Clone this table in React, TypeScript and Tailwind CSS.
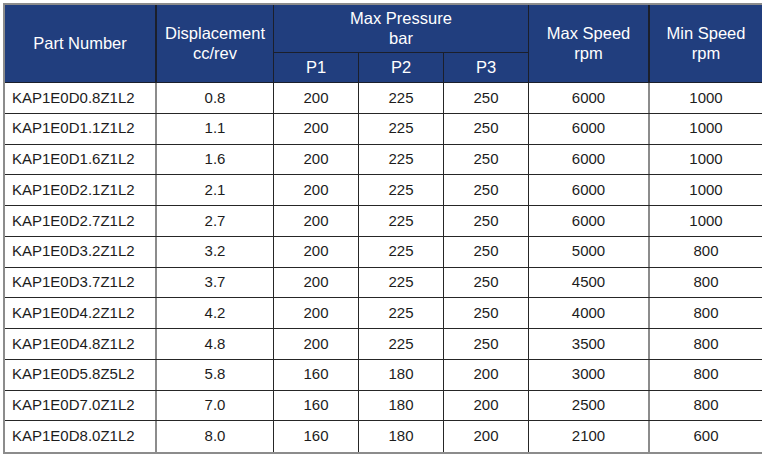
import React from "react";

type Row = [string, string, number, number, number, number, number];

const rows: Row[] = [
  ["KAP1E0D0.8Z1L2", "0.8", 200, 225, 250, 6000, 1000],
  ["KAP1E0D1.1Z1L2", "1.1", 200, 225, 250, 6000, 1000],
  ["KAP1E0D1.6Z1L2", "1.6", 200, 225, 250, 6000, 1000],
  ["KAP1E0D2.1Z1L2", "2.1", 200, 225, 250, 6000, 1000],
  ["KAP1E0D2.7Z1L2", "2.7", 200, 225, 250, 6000, 1000],
  ["KAP1E0D3.2Z1L2", "3.2", 200, 225, 250, 5000, 800],
  ["KAP1E0D3.7Z1L2", "3.7", 200, 225, 250, 4500, 800],
  ["KAP1E0D4.2Z1L2", "4.2", 200, 225, 250, 4000, 800],
  ["KAP1E0D4.8Z1L2", "4.8", 200, 225, 250, 3500, 800],
  ["KAP1E0D5.8Z5L2", "5.8", 160, 180, 200, 3000, 800],
  ["KAP1E0D7.0Z1L2", "7.0", 160, 180, 200, 2500, 800],
  ["KAP1E0D8.0Z1L2", "8.0", 160, 180, 200, 2100, 600],
];

const cols = "grid grid-cols-[152px_117px_85px_85px_85px_121px_1fr]";

const HeadCell = ({ className = "", children }: { className?: string; children: React.ReactNode }) => (
  <div
    className={
      "flex flex-col items-center justify-center text-center border-[#1b1f2b] leading-[19.5px] " +
      className
    }
  >
    {children}
  </div>
);

export default function App() {
  return (
    <div
      className="w-[762px] h-[457px] overflow-hidden bg-white pt-[3px] pl-[3px]"
      style={{ fontFamily: '"Liberation Sans", Arial, sans-serif' }}
    >
      <div className="w-[759px] border-l-2 border-t-2 border-b-2 border-[#8c8c8c]">
        {/* header */}
        <div className={cols + " grid-rows-[48px_30px] bg-[#213e7e] text-white text-[16.5px]"}>
          <HeadCell className="row-span-2 border-r-2 border-b">Part Number</HeadCell>
          <HeadCell className="row-span-2 border-r border-b">
            <span>Displacement</span>
            <span>cc/rev</span>
          </HeadCell>
          <HeadCell className="col-span-3 border-r border-b">
            <span>Max Pressure</span>
            <span>bar</span>
          </HeadCell>
          <HeadCell className="row-span-2 border-r-2 border-b">
            <span>Max Speed</span>
            <span>rpm</span>
          </HeadCell>
          <HeadCell className="row-span-2 border-b">
            <span>Min Speed</span>
            <span>rpm</span>
          </HeadCell>
          <HeadCell className="border-r border-b">P1</HeadCell>
          <HeadCell className="border-r border-b">P2</HeadCell>
          <HeadCell className="border-r border-b">P3</HeadCell>
        </div>

        {/* body */}
        {rows.map((r, i) => (
          <div
            key={r[0]}
            className={
              cols +
              " h-[30.75px] text-[15px] text-[#1c1c1c] " +
              (i < rows.length - 1 ? "border-b border-[#262626]" : "")
            }
          >
            <div className="flex items-center pl-[7px] border-r-2 border-[#8c8c8c]">{r[0]}</div>
            <div className="flex items-center justify-center border-r border-[#262626]">{r[1]}</div>
            <div className="flex items-center justify-center border-r border-[#262626]">{r[2]}</div>
            <div className="flex items-center justify-center border-r border-[#262626]">{r[3]}</div>
            <div className="flex items-center justify-center border-r border-[#262626]">{r[4]}</div>
            <div className="flex items-center justify-center border-r-2 border-[#8c8c8c]">{r[5]}</div>
            <div className="flex items-center justify-center">{r[6]}</div>
          </div>
        ))}
      </div>
    </div>
  );
}
